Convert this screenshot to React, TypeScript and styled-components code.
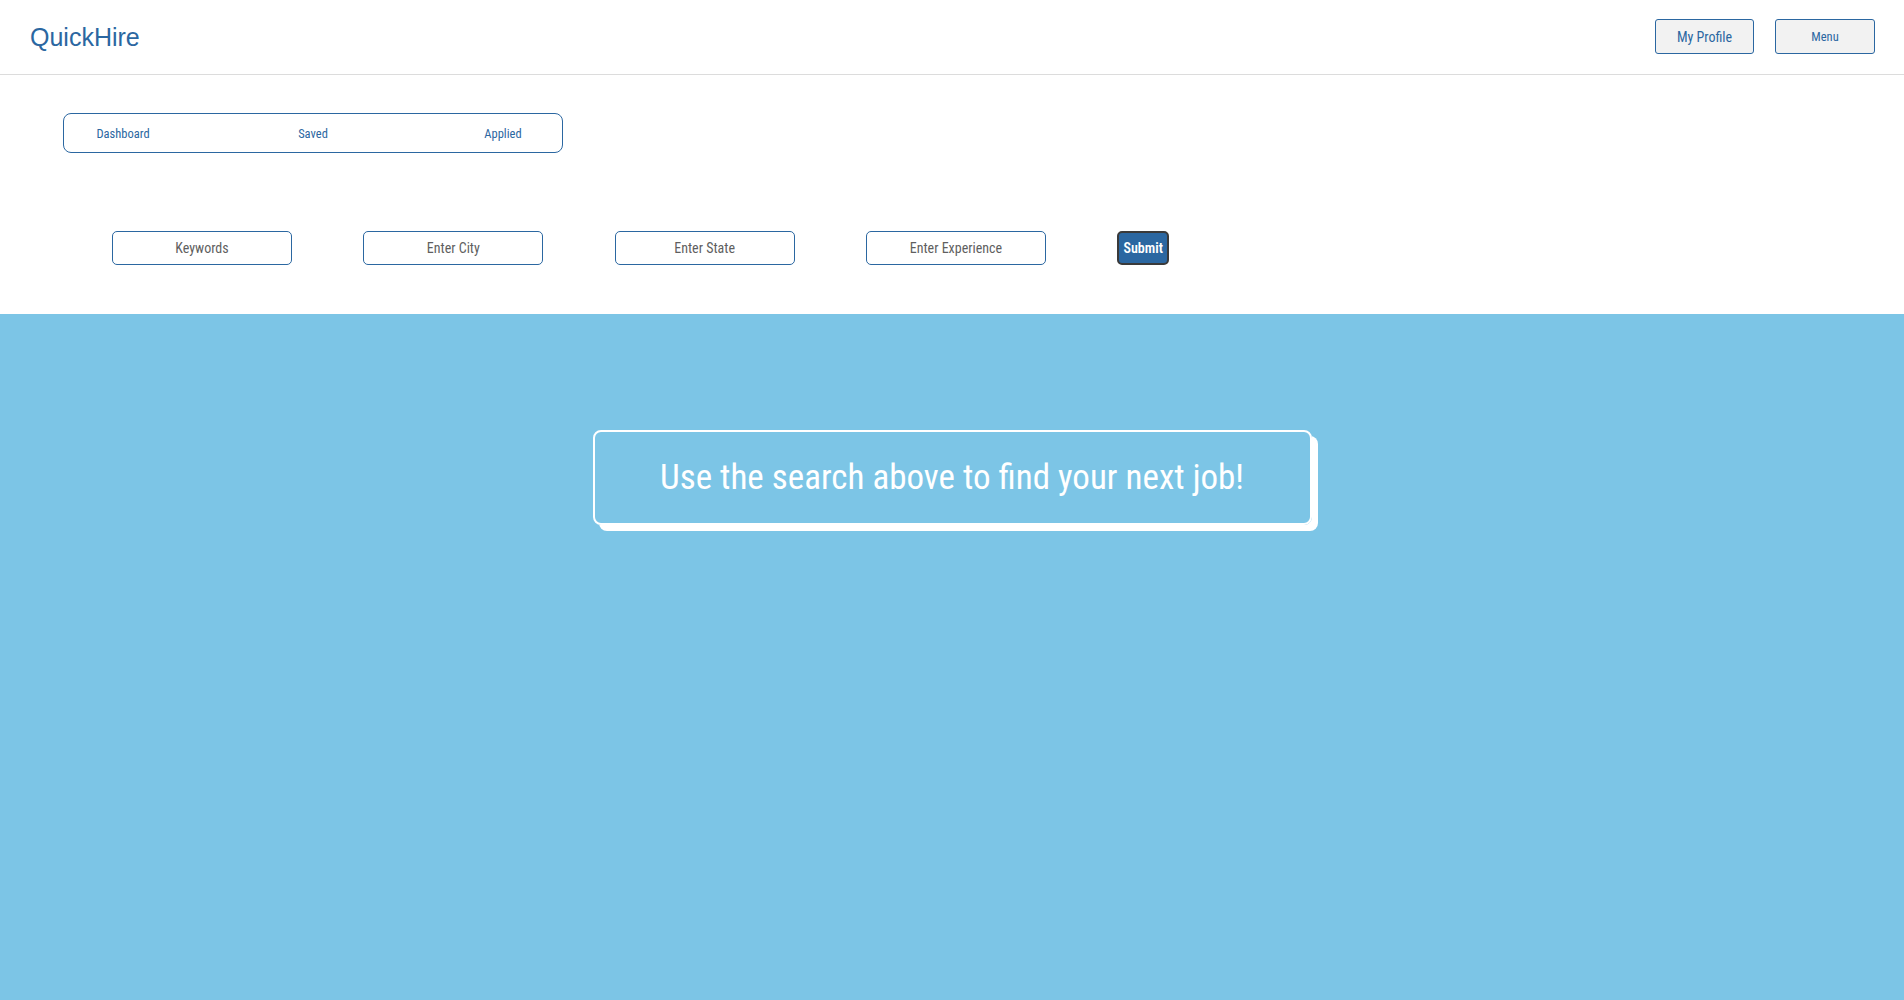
import React from "react";
import styled, { createGlobalStyle } from "styled-components";

const Global = createGlobalStyle`
  html, body { margin: 0; padding: 0; height: 100%; }
  body { font-family: "Roboto Condensed", Roboto, "Liberation Sans", sans-serif; background: #fff; }
  #root { min-height: 100vh; display: flex; flex-direction: column; }
  * { box-sizing: border-box; }
`;

const Header = styled.header`
  height: 75px;
  border-bottom: 1px solid #dcdcdc;
  display: flex;
  align-items: center;
  justify-content: space-between;
  padding: 0 29px 0 30px;
`;

const Logo = styled.div`
  font-family: "Liberation Sans", Arial, sans-serif;
  font-size: 25px;
  color: #2b67a1;
`;

const HeaderActions = styled.div`
  display: flex;
  gap: 21px;
  margin-top: -1px;
`;

const HeaderButton = styled.button<{ $w: number; $size: number }>`
  width: ${(p) => p.$w}px;
  height: 35px;
  background: #f2f2f2;
  border: 1.5px solid #2b67a1;
  border-radius: 3px;
  color: #2b67a1;
  font-family: inherit;
  font-size: ${(p) => p.$size}px;
  padding: 0;
`;

const Top = styled.section`
  background: #fff;
  padding: 38px 0 49px 63px;
`;

const Nav = styled.nav`
  width: 500px;
  height: 40px;
  border: 1.5px solid #2b67a1;
  border-radius: 8px;
  display: flex;
  align-items: center;
  padding-left: 9px;
  gap: 90px;
`;

const NavItem = styled.a`
  width: 100px;
  text-align: center;
  font-size: 12.5px;
  color: #2b67a1;
  cursor: pointer;
`;

const SearchRow = styled.form`
  margin-top: 78px;
  margin-left: 49px;
  display: flex;
  gap: 71.3px;
  align-items: center;
`;

const Field = styled.input`
  width: 180px;
  height: 34px;
  border: 1.5px solid #2b67a1;
  border-radius: 5px;
  text-align: center;
  font-family: inherit;
  font-size: 14px;
  color: #555;
  background: #fff;
  outline: none;
  &::placeholder { color: #5f5f5f; }
`;

const Submit = styled.button`
  width: 52px;
  height: 34px;
  background: #2b67a1;
  border: 2px solid #3a3a3a;
  border-radius: 5px;
  color: #fff;
  font-family: inherit;
  font-weight: 600;
  font-size: 14px;
  padding: 0;
`;

const Results = styled.main`
  flex: 1;
  background: #7cc5e6;
  display: flex;
  justify-content: center;
  align-items: flex-start;
  padding-top: 116px;
`;

const Card = styled.div`
  width: 719px;
  height: 95px;
  border: 2px solid #fff;
  border-radius: 8px;
  box-shadow: 6px 6px 0 #fff;
  display: flex;
  align-items: center;
  justify-content: center;
`;

const Message = styled.h2`
  margin: 0;
  font-weight: 400;
  font-size: 35px;
  color: #fff;
`;

export default function App() {
  return (
    <>
      <Global />
      <Header>
        <Logo>QuickHire</Logo>
        <HeaderActions>
          <HeaderButton $w={99} $size={14}>My Profile</HeaderButton>
          <HeaderButton $w={100} $size={12.5}>Menu</HeaderButton>
        </HeaderActions>
      </Header>
      <Top>
        <Nav>
          <NavItem>Dashboard</NavItem>
          <NavItem>Saved</NavItem>
          <NavItem>Applied</NavItem>
        </Nav>
        <SearchRow onSubmit={(e) => e.preventDefault()}>
          <Field placeholder="Keywords" />
          <Field placeholder="Enter City" />
          <Field placeholder="Enter State" />
          <Field placeholder="Enter Experience" />
          <Submit type="submit">Submit</Submit>
        </SearchRow>
      </Top>
      <Results>
        <Card>
          <Message>Use the search above to find your next job!</Message>
        </Card>
      </Results>
    </>
  );
}
